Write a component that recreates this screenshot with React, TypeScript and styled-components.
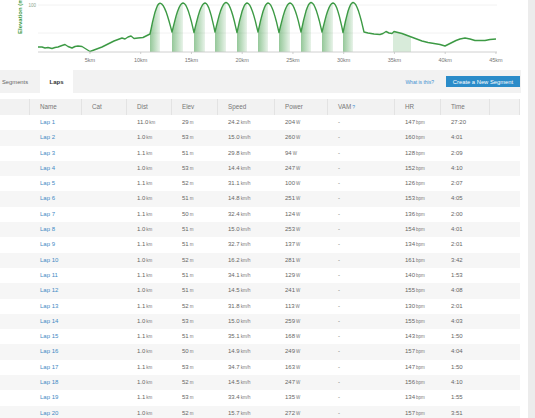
import React from "react";
import styled, { createGlobalStyle } from "styled-components";

const GlobalStyle = createGlobalStyle`
  html, body { margin: 0; padding: 0; background: #fff; }
  body { font-family: "Liberation Sans", Arial, sans-serif; }
`;

const COLS = "30px 52px 45px 45px 46px 57px 53px 67px 46px 49px 30px";
const GREEN = "#3d9a45";

const Page = styled.div`
  display: flex;
  width: 535px;
  min-height: 100vh;
  overflow: hidden;
`;
const Main = styled.div`
  width: 528px;
  display: flex;
  flex-direction: column;
  background: #fff;
`;
const Gutter = styled.div`
  flex: 1;
  background: #ececec;
`;
const ChartBox = styled.div`
  height: 70px;
  svg { display: block; }
`;
const TabBar = styled.div`
  display: flex;
  align-items: stretch;
  width: 521px;
  height: 23px;
  background: #f2f2f2;
`;
const Tab = styled.div<{ $active?: boolean }>`
  display: flex;
  align-items: center;
  justify-content: ${(p) => (p.$active ? "center" : "flex-start")};
  width: ${(p) => (p.$active ? "33px" : "38px")};
  padding-left: ${(p) => (p.$active ? "0" : "2px")};
  background: ${(p) => (p.$active ? "#fff" : "transparent")};
  color: ${(p) => (p.$active ? "#333" : "#666")};
  font-weight: ${(p) => (p.$active ? "bold" : "normal")};
  font-size: ${(p) => (p.$active ? "6px" : "5.8px")};
`;
const HelpLink = styled.a`
  margin-left: auto;
  margin-right: 12px;
  align-self: center;
  font-size: 5px;
  color: #3d8fd0;
  text-decoration: none;
`;
const CreateButton = styled.button`
  align-self: center;
  width: 74px;
  height: 11px;
  margin: 0 1px 0 0;
  padding: 0;
  border: none;
  background: #2b8cc9;
  color: #fff;
  font-family: inherit;
  font-size: 5.8px;
`;
const Table = styled.div`
  margin-top: 6px;
  width: 520px;
`;
const HeaderRow = styled.div`
  display: grid;
  grid-template-columns: ${COLS};
  height: 16px;
  background: #f2f2f2;
`;
const HeaderCell = styled.div`
  border-right: 1px solid #e3e3e3;
  padding-left: 10px;
  line-height: 16px;
  font-size: 6.3px;
  color: #777;
  white-space: nowrap;
`;
const Help = styled.span`
  color: #3d8fd0;
  font-size: 5px;
  margin-left: 1px;
`;
const Row = styled.div<{ $striped: boolean }>`
  display: grid;
  grid-template-columns: ${COLS};
  height: 15.3px;
  background: ${(p) => (p.$striped ? "#f6f6f6" : "#fff")};
`;
const Cell = styled.div`
  padding-left: 10px;
  line-height: 15.3px;
  font-size: 6px;
  color: #666;
  white-space: nowrap;
`;
const LapLink = styled.a`
  color: #3f8ac4;
  text-decoration: none;
`;
const Unit = styled.span`
  font-size: 4.5px;
  margin-left: 1px;
  color: #777;
`;

type Lap = [string, string, string, string, string, string, string];
const laps: Lap[] = [
  ["11.0", "29", "24.2", "204", "147", "27:20", ""],
  ["1.0", "53", "15.0", "260", "160", "4:01", ""],
  ["1.1", "51", "29.8", "94", "128", "2:09", ""],
  ["1.0", "53", "14.4", "247", "152", "4:10", ""],
  ["1.1", "52", "31.1", "100", "126", "2:07", ""],
  ["1.0", "51", "14.8", "251", "153", "4:05", ""],
  ["1.1", "50", "32.4", "124", "136", "2:00", ""],
  ["1.0", "51", "15.0", "253", "154", "4:01", ""],
  ["1.1", "51", "32.7", "137", "134", "2:01", ""],
  ["1.0", "52", "16.2", "281", "161", "3:42", ""],
  ["1.1", "51", "34.1", "129", "140", "1:53", ""],
  ["1.0", "51", "14.5", "241", "155", "4:08", ""],
  ["1.1", "52", "31.8", "113", "130", "2:01", ""],
  ["1.0", "53", "15.0", "259", "155", "4:03", ""],
  ["1.1", "51", "35.1", "168", "143", "1:50", ""],
  ["1.0", "50", "14.9", "249", "157", "4:04", ""],
  ["1.1", "53", "34.7", "163", "147", "1:50", ""],
  ["1.0", "52", "14.5", "247", "156", "4:10", ""],
  ["1.1", "53", "33.4", "135", "134", "1:55", ""],
  ["1.0", "52", "15.7", "272", "157", "3:51", ""],
];

const kmX = (km: number) => 39.2 + km * 10.15;
const BASE = 52;

const pre: [number, number][] = [
  [38, 47], [42, 47], [45, 48], [48, 47.5], [52, 48.5], [55, 47.5], [58, 47],
  [62, 45.5], [65, 44.5], [68, 46.5], [72, 48], [75, 46.5], [78, 46], [82, 46.5],
  [86, 49], [90, 51.5], [94, 50], [98, 48.5], [102, 47], [106, 45], [110, 43],
  [114, 41], [118, 39.5], [122, 38], [125, 39], [128, 37], [131, 36], [134, 38.5],
  [138, 38], [143, 37.5], [147, 35.5], [150, 34],
];
const post: [number, number][] = [
  [368, 33], [374, 34], [380, 34.5], [383, 33.5], [386, 31.5], [389, 33],
  [392, 33.5], [394, 31.5], [398, 32.5], [402, 33.5], [406, 35], [410, 36.5],
  [414, 38], [418, 39.5], [422, 41], [428, 42.5], [434, 43.5], [440, 44.5],
  [445, 46], [448, 44.5], [452, 42.5], [456, 40.5], [460, 39], [465, 38],
  [470, 39], [475, 40.5], [485, 40.5], [490, 39.5], [496, 39],
];
const troughs = [150, 172, 194, 215, 237, 258, 279, 301, 322, 343, 364];
const troughY = [34, 32, 32.5, 32, 32.5, 32, 32.5, 32, 32, 32.5, 32];
const peaks = [160, 183, 205, 226, 247, 268, 290, 311, 333, 353];
const peakY = [3.2, 3, 3, 2.5, 3, 3, 3, 2.5, 3, 2.5];

function rise(i: number): [number, number][] {
  const pts: [number, number][] = [];
  const x0 = troughs[i], x1 = peaks[i], y0 = troughY[i], y1 = peakY[i];
  for (let s = 0; s <= 8; s++) {
    const t = s / 8;
    pts.push([x0 + (x1 - x0) * t, y0 - (y0 - y1) * Math.sin((Math.PI / 2) * t)]);
  }
  return pts;
}
function fall(i: number): [number, number][] {
  const pts: [number, number][] = [];
  const x0 = peaks[i], x1 = troughs[i + 1], y0 = peakY[i], y1 = troughY[i + 1];
  for (let s = 1; s <= 8; s++) {
    const t = s / 8;
    pts.push([x0 + (x1 - x0) * t, y1 - (y1 - y0) * Math.sin((Math.PI / 2) * (1 - t))]);
  }
  return pts;
}

const arches: [number, number][] = [];
peaks.forEach((_, i) => {
  arches.push(...rise(i).slice(i === 0 ? 1 : 1), ...fall(i));
});
const line = [...pre, ...arches, ...post];
const toStr = (pts: [number, number][]) => pts.map(([x, y]) => `${x.toFixed(1)},${y.toFixed(1)}`).join(" ");

const climbs = peaks.map((_, i) => {
  const r = rise(i);
  return toStr([...r, [peaks[i], BASE], [troughs[i], BASE]]);
});
const lateBand = toStr([
  [393, BASE], [393, 32], [394, 31.5], [398, 32.5], [402, 33.5], [406, 35], [410, 36.5], [411, 36.8], [411, BASE],
]);

function ElevationChart() {
  const kms = [5, 10, 15, 20, 25, 30, 35, 40, 45];
  return (
    <svg width="528" height="70" viewBox="0 0 528 70">
      <defs>
        <linearGradient id="climb" x1="0" x2="1" y1="0" y2="0">
          <stop offset="0" stopColor={GREEN} stopOpacity="0.55" />
          <stop offset="1" stopColor={GREEN} stopOpacity="0.12" />
        </linearGradient>
      </defs>
      <line x1="38" x2="497" y1="5" y2="5" stroke="#efefef" strokeWidth="0.8" />
      <line x1="38" x2="497" y1="33" y2="33" stroke="#efefef" strokeWidth="0.8" />
      <text x="36" y="6.5" fontSize="4.5" fill="#8fa58f" textAnchor="end" fontFamily="Liberation Sans, Arial, sans-serif">100</text>
      <text transform="translate(21.5,34) rotate(-90)" fontSize="6" fontWeight="bold" fill={GREEN} fontFamily="Liberation Sans, Arial, sans-serif">Elevation (m)</text>
      {climbs.map((p, i) => (
        <polygon key={i} points={p} fill="url(#climb)" />
      ))}
      <polygon points={lateBand} fill={GREEN} fillOpacity="0.2" />
      <polyline points={toStr(line)} fill="none" stroke={GREEN} strokeWidth="1.4" strokeLinejoin="round" />
      <line x1="38" x2="497" y1={BASE} y2={BASE} stroke="#c4c4c4" strokeWidth="0.8" />
      {kms.map((k) => (
        <g key={k}>
          <line x1={kmX(k)} x2={kmX(k)} y1={BASE} y2={BASE + 2} stroke="#c4c4c4" strokeWidth="0.8" />
          <text x={kmX(k)} y="62" fontSize="5.5" fill="#777" textAnchor="middle" fontFamily="Liberation Sans, Arial, sans-serif">
            {k}km
          </text>
        </g>
      ))}
    </svg>
  );
}

const headers = ["", "Name", "Cat", "Dist", "Elev", "Speed", "Power", "VAM", "HR", "Time", ""];

export default function App() {
  return (
    <>
      <GlobalStyle />
      <Page>
        <Main>
          <ChartBox>
            <ElevationChart />
          </ChartBox>
          <TabBar>
            <Tab>Segments</Tab>
            <Tab $active>Laps</Tab>
            <HelpLink href="#">What is this?</HelpLink>
            <CreateButton>Create a New Segment</CreateButton>
          </TabBar>
          <Table>
            <HeaderRow>
              {headers.map((h, i) => (
                <HeaderCell key={i}>
                  {h}
                  {h === "VAM" && <Help>?</Help>}
                </HeaderCell>
              ))}
            </HeaderRow>
            {laps.map((l, i) => (
              <Row key={i} $striped={i % 2 === 1}>
                <Cell />
                <Cell>
                  <LapLink href="#">Lap {i + 1}</LapLink>
                </Cell>
                <Cell />
                <Cell>
                  {l[0]}
                  <Unit>km</Unit>
                </Cell>
                <Cell>
                  {l[1]}
                  <Unit>m</Unit>
                </Cell>
                <Cell>
                  {l[2]}
                  <Unit>km/h</Unit>
                </Cell>
                <Cell>
                  {l[3]}
                  <Unit>W</Unit>
                </Cell>
                <Cell>-</Cell>
                <Cell>
                  {l[4]}
                  <Unit>bpm</Unit>
                </Cell>
                <Cell>{l[5]}</Cell>
                <Cell />
              </Row>
            ))}
          </Table>
        </Main>
        <Gutter />
      </Page>
    </>
  );
}
